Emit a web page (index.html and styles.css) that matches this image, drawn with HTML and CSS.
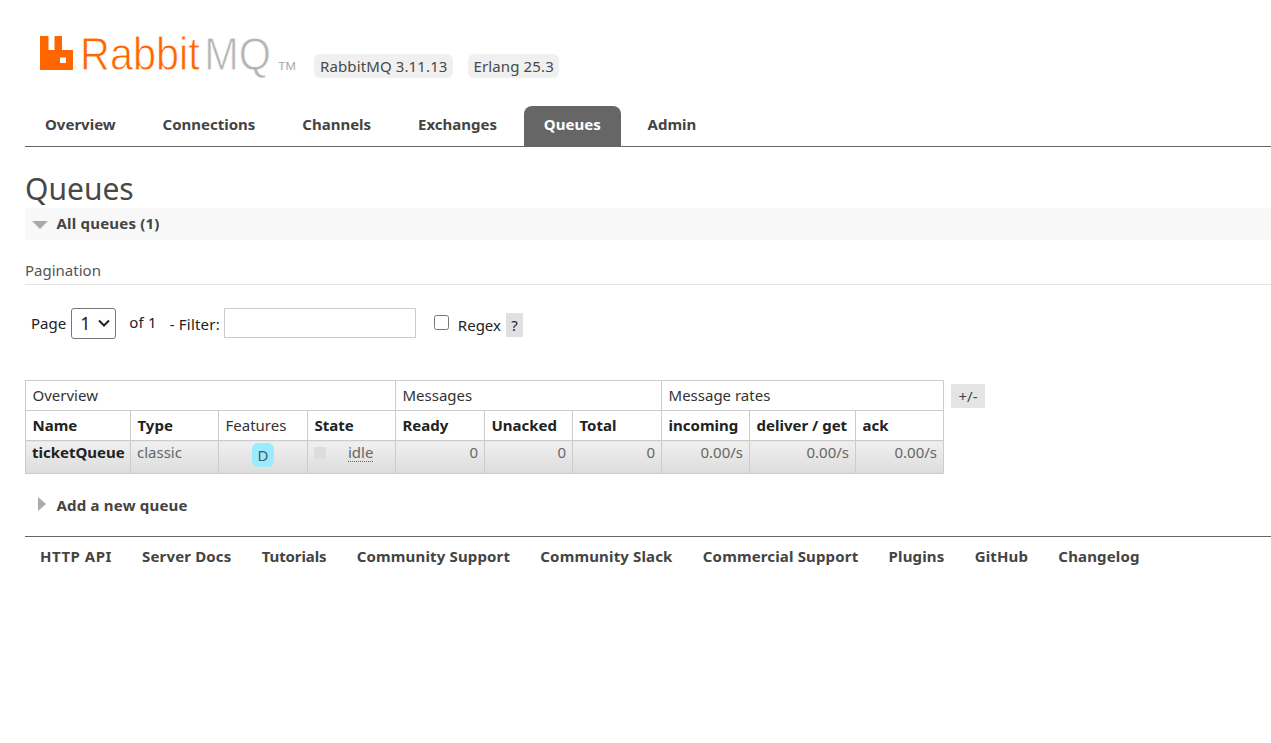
FILE: index.html
```html
<!DOCTYPE html>
<html lang="en">
<head>
<meta charset="utf-8">
<title>RabbitMQ Management</title>
<link rel="stylesheet" href="styles.css">
</head>
<body>
<header class="header">
  <svg class="logo" viewBox="0 0 259 50" width="259" height="50">
    <path class="logo-mark" d="M0 7C0 6.400.4 6 1 6H7.500C8.100 6 8.500 6.400 8.500 7V20H14.500V7C14.500 6.400 14.900 6 15.500 6H21C21.600 6 22 6.400 22 7V20H32C32.600 20 33 20.400 33 21V39C33 39.600 32.600 40 32 40H1C.4 40 0 39.600 0 39ZM20 27.500V33H26V27.500Z" fill-rule="evenodd"/>
    <text class="logo-word" x="40" y="40" textLength="191" lengthAdjust="spacingAndGlyphs"><tspan class="logo-rabbit">Rabbit</tspan><tspan class="logo-mq" dx="5">MQ</tspan></text>
    <text class="logo-tm" x="238" y="40" textLength="18" lengthAdjust="spacingAndGlyphs">TM</text>
  </svg>
  <span class="pill">RabbitMQ 3.11.13</span>
  <span class="pill">Erlang 25.3</span>
</header>
<nav class="tabs">
  <a class="tab">Overview</a>
  <a class="tab">Connections</a>
  <a class="tab">Channels</a>
  <a class="tab">Exchanges</a>
  <a class="tab active">Queues</a>
  <a class="tab">Admin</a>
</nav>
<main class="main">
  <h1 class="title">Queues</h1>
  <div class="section-head"><span class="tri-down"></span>All queues (1)</div>
  <h3 class="pagination-title">Pagination</h3>
  <form class="filter-row">
    <span class="lbl-page">Page</span>
    <select class="page-select"><option>1</option></select>
    <span class="lbl-of">of 1</span>
    <span class="lbl-filter">- Filter:</span>
    <input class="filter-input" type="text">
    <input class="regex-check" type="checkbox">
    <span class="lbl-regex">Regex</span>
    <span class="help">?</span>
  </form>
  <div class="table-row">
    <table class="queues">
      <colgroup>
        <col class="c-name"><col class="c-type"><col class="c-feat"><col class="c-state">
        <col class="c-ready"><col class="c-unack"><col class="c-total">
        <col class="c-inc"><col class="c-del"><col class="c-ack">
      </colgroup>
      <thead>
        <tr class="group"><th colspan="4">Overview</th><th colspan="3">Messages</th><th colspan="3">Message rates</th></tr>
        <tr class="cols"><th>Name</th><th>Type</th><th class="plain">Features</th><th>State</th><th>Ready</th><th>Unacked</th><th>Total</th><th>incoming</th><th>deliver / get</th><th>ack</th></tr>
      </thead>
      <tbody>
        <tr>
          <td class="name">ticketQueue</td>
          <td class="type">classic</td>
          <td class="feat"><span class="badge">D</span></td>
          <td class="state"><div class="state-in"><span class="state-dot"></span><span class="state-text">idle</span></div></td>
          <td class="num">0</td><td class="num">0</td><td class="num">0</td>
          <td class="num">0.00/s</td><td class="num">0.00/s</td><td class="num">0.00/s</td>
        </tr>
      </tbody>
    </table>
    <span class="plusminus">+/-</span>
  </div>
  <div class="section-closed"><span class="tri-right"></span>Add a new queue</div>
</main>
<footer class="footer">
  <a class="wide">HTTP API</a><a>Server Docs</a><a class="narrow">Tutorials</a><a>Community Support</a><a>Community Slack</a><a>Commercial Support</a><a>Plugins</a><a>GitHub</a><a>Changelog</a>
</footer>
</body>
</html>
```
FILE: styles.css
```css
* { box-sizing: border-box; }
html, body { margin: 0; padding: 0; background: #fff; }
body {
  font-family: "Noto Sans", "Open Sans", sans-serif;
  font-size: 15px;
  color: #444;
  height: 743px;
  overflow: hidden;
  padding-left: 25px;
}
.header { display: flex; align-items: flex-start; height: 106px; padding-top: 30px; }
.logo { flex: none; margin: 0 15px 0 15px; overflow: visible; }
.logo-mark { fill: #ff6600; }
.logo-word { font: 400 46px "Liberation Sans", sans-serif; stroke: #fff; stroke-width: .8px; }
.logo-rabbit { fill: #ff6600; }
.logo-mq { fill: #b5b5b5; }
.logo-tm { font: 400 11px "Liberation Sans", sans-serif; fill: #aaa; }
.pill { margin-top: 24px; height: 24px; line-height: 24px; padding: 0 5px 0 6px; background: #f0f0f0; border-radius: 6px; margin-right: 15px; color: #484848; white-space: nowrap; letter-spacing: .12px; }
.tabs { display: flex; height: 41px; border-bottom: 1px solid #666; }
.tab { height: 40px; line-height: 37px; padding: 0 20px; font-weight: 700; color: #444; margin-right: 6.900px; white-space: nowrap; }
.tab.active { background: #666; color: #fff; border-radius: 8px 8px 0 0; }
.main { display: block; }
.title { margin: 0; padding-top: 24px; height: 61px; font-size: 30px; line-height: 36px; font-weight: 400; color: #484848; }
.section-head { height: 32px; line-height: 31px; background: #f8f8f8; font-weight: 700; position: relative; padding-left: 31.5px; letter-spacing: .2px; }
.tri-down { position: absolute; left: 7px; top: 13px; width: 0; height: 0; border: 8px solid transparent; border-top: 8px solid #aaa; border-bottom: 0; }
.pagination-title { margin: 0; padding-top: 20px; height: 45px; border-bottom: 1px solid #e4e4e4; font-size: 15px; line-height: 20px; font-weight: 400; color: #555; }
.filter-row { display: flex; align-items: center; height: 95px; padding: 0 0 0 6px; color: #222; }
.filter-row > * { margin-top: -19px; }
.lbl-page { margin-right: 5px; }
.page-select { appearance: none; width: 45px; height: 31px; font-size: 18px; font-family: inherit; color: #222; border: 1px solid #767676; border-radius: 3px; background: #fff url("data:image/svg+xml,%3Csvg xmlns='http://www.w3.org/2000/svg' width='12' height='8'%3E%3Cpath d='M1 1.500l5 5 5-5' fill='none' stroke='%23222' stroke-width='2'/%3E%3C/svg%3E") no-repeat right 5px center; margin-right: 13px; padding-left: 8px; }
.lbl-of { margin-right: 13px; margin-top: -22px; letter-spacing: .2px; }
.lbl-filter { margin-right: 4px; margin-top: -18px; letter-spacing: .2px; }
.filter-input { width: 192px; height: 30px; border: 1px solid #ccc; margin-right: 18px; background: #fff; margin-top: -19px; }
.regex-check { width: 15px; height: 15px; margin: -20px 9px 0 0; }
.lbl-regex { margin-right: 5px; margin-top: -16px; }
.help { background: #e0e0e0; width: 17px; height: 24px; line-height: 24px; text-align: center; font-size: 15px; color: #222; margin-top: -15px; }
.table-row { display: flex; align-items: flex-start; }
.queues { border-collapse: collapse; table-layout: fixed; width: 918px; color: #333; }
.c-name { width: 105px; } .c-type { width: 88px; } .c-feat { width: 89px; } .c-state { width: 88px; }
.c-ready { width: 89px; } .c-unack { width: 88px; } .c-total { width: 89px; }
.c-inc { width: 88px; } .c-del { width: 106px; } .c-ack { width: 88px; }
.queues th, .queues td { border: 1px solid #ccc; padding: 0 6px; text-align: left; white-space: nowrap; }
.queues th { padding: 0 6px 2px 6.5px; }
.queues .group th { height: 30px; font-weight: 400; }
.queues .cols th { height: 30px; font-weight: 700; color: #222; }
.queues .cols th.plain { font-weight: 400; color: #333; }
.queues tbody tr { height: 33px; }
.queues td { background: linear-gradient(#f0f0f0, #dcdcdc); color: #666; vertical-align: top; padding-top: 1px; line-height: 20px; }
.queues td.name { font-weight: 700; color: #222; }
.queues td.feat { text-align: center; padding: 2px 0 0 0; }
.queues td.num { text-align: right; }
.badge { display: inline-block; width: 22px; height: 24px; line-height: 25px; background: #99ebff; color: #555; border-radius: 6px; }
.state-in { display: flex; }
.state-dot { width: 12px; height: 12px; background: #ddd; margin: 5px 22px 0 0; flex: none; }
.state-text { color: #666; border-bottom: 1px dotted #666; height: 20px; line-height: 20px; }
.plusminus { margin: 4px 0 0 7px; width: 34px; height: 24px; line-height: 24px; background: #e4e4e4; text-align: center; color: #444; }
.section-closed { position: relative; margin-top: 21px; height: 21px; line-height: 21px; padding-left: 31.5px; font-weight: 700; letter-spacing: .2px; }
.tri-right { position: absolute; left: 13px; top: 2px; width: 0; height: 0; border: 7px solid transparent; border-left: 8px solid #aaa; border-right: 0; }
.footer { margin-top: 20px; border-top: 1px solid #666; height: 40px; display: flex; padding: 8px 0 0 15px; gap: 30.25px; font-weight: 700; line-height: 22px; color: #444; white-space: nowrap; letter-spacing: .15px; }
.footer .wide { letter-spacing: .5px; }
.footer .narrow { letter-spacing: -.1px; }
```
